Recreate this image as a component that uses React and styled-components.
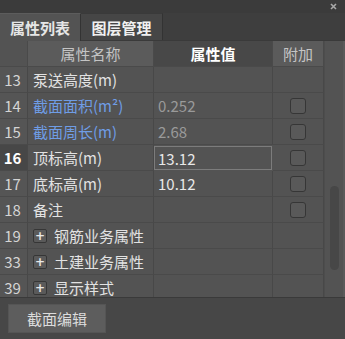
import React from "react";
import styled, { createGlobalStyle } from "styled-components";

const GlobalStyle = createGlobalStyle`
  html, body {
    margin: 0;
    padding: 0;
    background: #474747;
  }
  body {
    font-family: "Noto Sans CJK SC", "Noto Sans", sans-serif;
  }
`;

const Panel = styled.div`
  width: 345px;
  height: 339px;
  display: flex;
  flex-direction: column;
  background: #474747;
  overflow: hidden;
`;

const TitleBar = styled.div`
  height: 15px;
  background: #3b3b3b;
  display: flex;
  justify-content: flex-end;
  align-items: center;
  padding-right: 8px;
`;

const TabRow = styled.div`
  height: 28px;
  box-sizing: border-box;
  display: flex;
  align-items: flex-end;
  background: #3e3e3e;
  border-bottom: 1px solid #3a3a3a;
`;

const Tab = styled.div`
  height: ${(p) => (p.active ? "28px" : "27px")};
  width: ${(p) => p.w}px;
  box-sizing: border-box;
  display: flex;
  align-items: center;
  justify-content: center;
  font-size: 15px;
  font-weight: bold;
  color: ${(p) => (p.active ? "#e6e6e6" : "#f0f0f0")};
  background: ${(p) => (p.active ? "#535353" : "#464646")};
  border-right: 1px solid #333;
  border-top: 1px solid ${(p) => (p.active ? "#5c5c5c" : "#3a3a3a")};
  margin-bottom: ${(p) => (p.active ? "-1px" : "0")};
`;

const TableWrap = styled.div`
  display: flex;
  height: 257px;
  box-sizing: border-box;
  background: #535353;
  border-bottom: 1px solid #3a3a3a;
`;

const Grid = styled.div`
  width: 324px;
  display: grid;
  grid-template-columns: 28px 126px 119px 51px;
  grid-auto-rows: 26px;
  overflow: hidden;
`;

const Cell = styled.div`
  box-sizing: border-box;
  display: flex;
  align-items: center;
  border-right: 1px solid #484848;
  border-bottom: 1px solid #4a4a4a;
  font-size: 15px;
  color: #e2e2e2;
  white-space: nowrap;
  overflow: hidden;
`;

const HeadCell = styled(Cell)`
  justify-content: center;
  color: ${(p) => (p.sorted ? "#ffffff" : "#c4c4c4")};
  font-weight: ${(p) => (p.sorted ? "bold" : "normal")};
  background: ${(p) => (p.sorted ? "#484848" : p.blank ? "#535353" : "#5b5b5b")};
  border-right: 1px solid #4a4a4a;
`;

const NumCell = styled(Cell)`
  justify-content: center;
  padding-right: 2px;
  font-size: 15px;
  color: ${(p) => (p.current ? "#ffffff" : "#d4d4d4")};
  font-weight: ${(p) => (p.current ? "bold" : "normal")};
  background: ${(p) => (p.current ? "#474747" : "#555555")};
`;

const NameCell = styled(Cell)`
  padding-left: 5px;
  gap: 7px;
  color: ${(p) => (p.link ? "#6f9de6" : "#e2e2e2")};
`;

const ValueCell = styled(Cell)`
  padding-left: 4px;
  color: ${(p) => (p.dim ? "#9a9a9a" : "#e8e8e8")};
  ${(p) =>
    p.editing &&
    `
    border: 1px solid #7c7c7c;
    margin: 1px 1px 1px 0;
    padding-left: 3px;
  `}
`;

const CheckCell = styled(Cell)`
  justify-content: center;
`;

const CheckBox = styled.div`
  width: 16px;
  height: 16px;
  box-sizing: border-box;
  border: 1px solid #363636;
  border-radius: 3px;
  background: #595959;
`;

const Expander = styled.div`
  width: 14px;
  height: 14px;
  box-sizing: border-box;
  border: 1px solid #363636;
  border-radius: 2px;
  background: #5a5a5a;
  color: #e8e8e8;
  font-size: 12px;
  line-height: 12px;
  display: flex;
  align-items: center;
  justify-content: center;
  font-family: "DejaVu Sans", sans-serif;
  font-weight: bold;
`;

const ScrollTrack = styled.div`
  flex: 1;
  display: flex;
  justify-content: center;
  padding-top: 145px;
  border-right: 2px solid #5a5a5a;
  border-left: 1px solid #4d4d4d;
`;

const Thumb = styled.div`
  width: 9px;
  height: 84px;
  border-radius: 5px;
  background: #474747;
`;

const Footer = styled.div`
  flex: 1;
  padding: 6px 8px;
  display: flex;
  align-items: flex-start;
`;

const Button = styled.div`
  width: 98px;
  height: 29px;
  background: #5d5d5d;
  color: #dcdcdc;
  font-size: 15px;
  display: flex;
  align-items: center;
  justify-content: center;
  border: 1px solid #555;
  box-sizing: border-box;
`;

const rows = [
  { n: 13, name: "泵送高度(m)", value: "", check: false },
  { n: 14, name: "截面面积(m²)", value: "0.252", dim: true, link: true, check: true },
  { n: 15, name: "截面周长(m)", value: "2.68", dim: true, link: true, check: true },
  { n: 16, name: "顶标高(m)", value: "13.12", editing: true, current: true, check: true },
  { n: 17, name: "底标高(m)", value: "10.12", check: true },
  { n: 18, name: "备注", value: "", check: true },
  { n: 19, name: "钢筋业务属性", group: true },
  { n: 33, name: "土建业务属性", group: true },
  { n: 39, name: "显示样式", group: true },
];

function CloseIcon() {
  return (
    <svg width="7" height="7" viewBox="0 0 7 7">
      <path d="M1 1 L6 6 M6 1 L1 6" stroke="#a8a8a8" strokeWidth="1.6" />
    </svg>
  );
}

export default function App() {
  return (
    <Panel>
      <GlobalStyle />
      <TitleBar>
        <CloseIcon />
      </TitleBar>
      <TabRow>
        <Tab active w={81}>属性列表</Tab>
        <Tab w={82}>图层管理</Tab>
      </TabRow>
      <TableWrap>
        <Grid>
          <HeadCell blank />
          <HeadCell>属性名称</HeadCell>
          <HeadCell sorted>属性值</HeadCell>
          <HeadCell>附加</HeadCell>
          {rows.map((r) => (
            <React.Fragment key={r.n}>
              <NumCell current={r.current}>{r.n}</NumCell>
              <NameCell link={r.link}>
                {r.group && <Expander>+</Expander>}
                {r.name}
              </NameCell>
              <ValueCell dim={r.dim} editing={r.editing}>
                {r.value}
              </ValueCell>
              <CheckCell>{r.check && <CheckBox />}</CheckCell>
            </React.Fragment>
          ))}
        </Grid>
        <ScrollTrack>
          <Thumb />
        </ScrollTrack>
      </TableWrap>
      <Footer>
        <Button>截面编辑</Button>
      </Footer>
    </Panel>
  );
}
